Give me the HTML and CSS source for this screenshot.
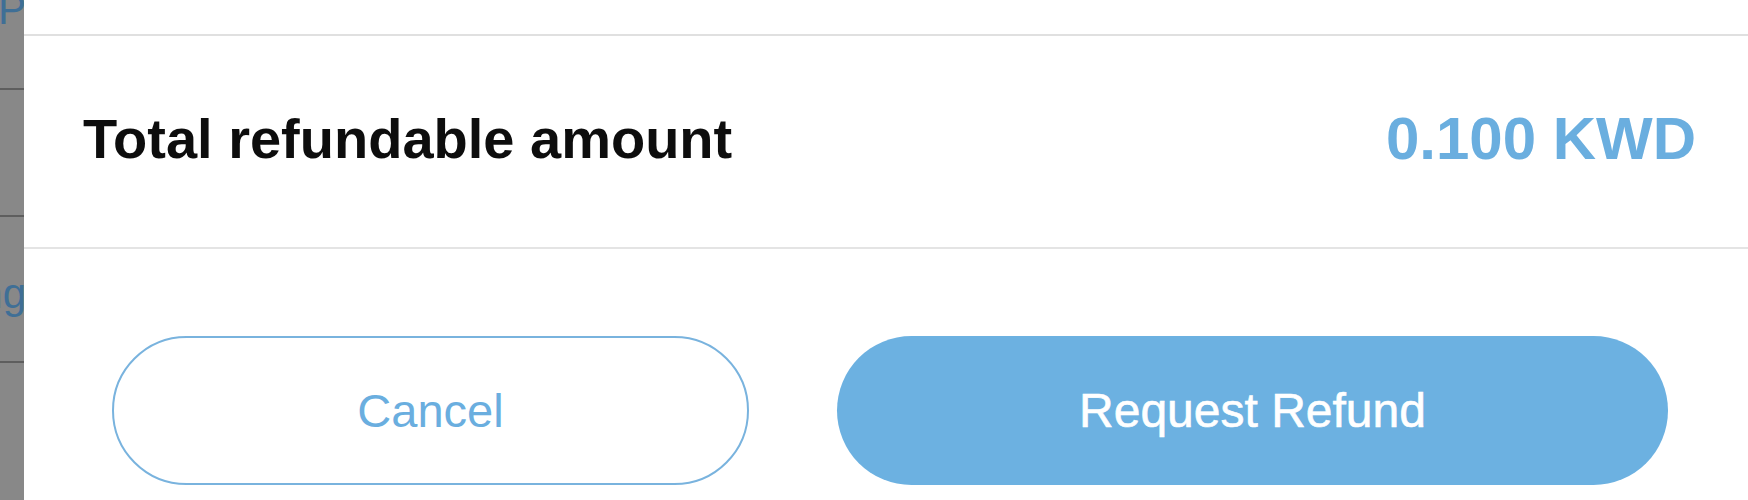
FILE: index.html
```html
<!DOCTYPE html>
<html lang="en">

<head>
    <meta charset="UTF-8">
    <title>Refund</title>
    <link rel="stylesheet" href="styles.css">
</head>

<body>
    <div class="page">
        <div class="backdrop">
            <div class="bg-row bg-row-first"><span>Top-up P</span></div>
            <div class="bg-row"><span></span></div>
            <div class="bg-row bg-row-tall"><span>Shopping</span></div>
            <div class="bg-row bg-row-last"><span></span></div>
        </div>

        <div class="modal">
            <div class="modal-top"></div>

            <div class="total-row">
                <span class="total-label">Total refundable amount</span>
                <span class="total-amount">0.100 KWD</span>
            </div>

            <div class="actions">
                <button class="btn btn-cancel">Cancel</button>
                <button class="btn btn-refund">Request Refund</button>
            </div>
        </div>
    </div>
</body>

</html>
```

FILE: styles.css
```css
body {
    margin: 0;
    font-family: "Liberation Sans", Arial, Helvetica, sans-serif;
    background-color: #fff;
}

.page {
    display: flex;
    height: 500px;
    overflow: hidden;
}

/* dimmed page behind the sheet */
.backdrop {
    width: 24px;
    flex-shrink: 0;
    background-color: #888;
    overflow: hidden;
}

.bg-row {
    height: 125px;
    border-bottom: 2px solid #5e5e5e;
    display: flex;
    justify-content: flex-end;
    align-items: center;
    white-space: nowrap;
    overflow: hidden;
}

.bg-row-first {
    height: 88px;
    align-items: flex-start;
}

.bg-row-first span {
    margin-top: -14px;
}

.bg-row-tall {
    height: 144px;
}

.bg-row-last {
    border-bottom: none;
}

.bg-row span {
    font-size: 42px;
    color: #3f6f96;
    margin-right: -2px;
}

.bg-row-tall span {
    margin-top: 10px;
}

.modal {
    flex: 1;
    background-color: #fff;
}

.modal-top {
    height: 34px;
    border-bottom: 2px solid #e0e0e0;
}

.total-row {
    height: 213px;
    padding: 0 52px 6px 59px;
    box-sizing: border-box;
    display: flex;
    justify-content: space-between;
    align-items: center;
    border-bottom: 2px solid #e4e4e4;
}

.total-label {
    font-size: 56px;
    font-weight: bold;
    color: #0d0d0d;
}

.total-amount {
    font-size: 60px;
    font-weight: bold;
    color: #6aaedf;
}

.actions {
    display: flex;
    gap: 88px;
    padding: 87px 0 0 88px;
}

.btn {
    height: 149px;
    border-radius: 75px;
    font-family: "Liberation Sans", Arial, Helvetica, sans-serif;
    cursor: pointer;
    box-sizing: border-box;
}

.btn-cancel {
    width: 637px;
    background-color: #fff;
    border: 2px solid #79b3de;
    color: #6aaedf;
    font-size: 47px;
}

.btn-refund {
    width: 831px;
    background-color: #6cb1e1;
    border: none;
    color: #fff;
    font-size: 48px;
    -webkit-text-stroke: 0.6px #fff;
}
```
